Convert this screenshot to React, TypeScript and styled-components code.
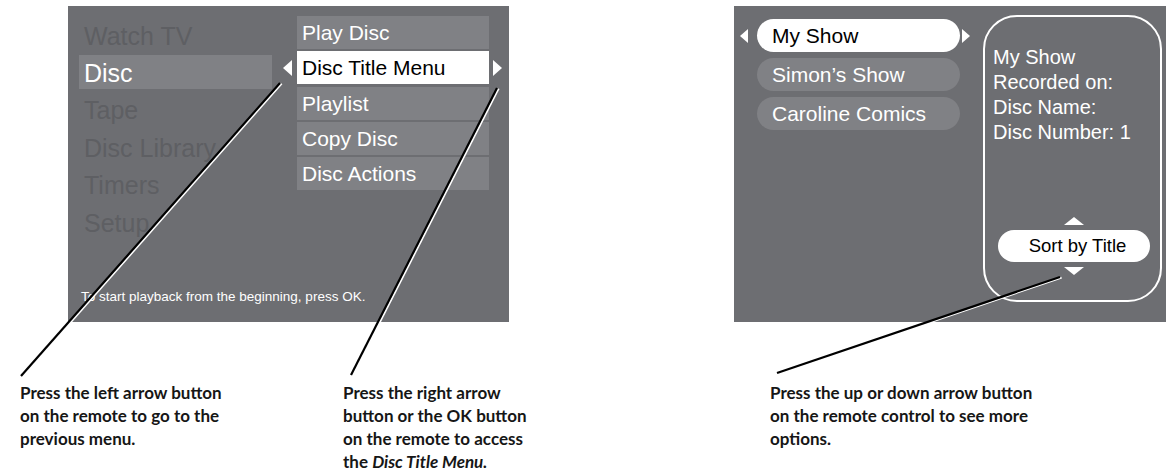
import React from 'react';
import styled, { createGlobalStyle } from 'styled-components';

const GlobalStyle = createGlobalStyle`
  html, body { margin: 0; padding: 0; background: #ffffff; }
  body { font-family: "Liberation Sans", Arial, sans-serif; }
`;

const SCREEN_BG = '#6d6e72';
const ITEM_BG = '#808185';
const DIM = '#5e5f63';

const Page = styled.div`
  position: relative;
  width: 1166px;
  height: 473px;
  overflow: hidden;
`;

const ScreensRow = styled.div`
  display: flex;
  padding: 6px 0 0 68px;
  gap: 225px;
`;

const Screen = styled.section<{ $w: number }>`
  width: ${p => p.$w}px;
  height: 316px;
  flex: none;
  box-sizing: border-box;
  background: ${SCREEN_BG};
  color: #ffffff;
  font-family: "Liberation Sans", Arial, sans-serif;
`;

const LeftScreen = styled(Screen)`
  display: flex;
  flex-direction: column;
  padding: 0 0 17px 11px;
`;

const MenuArea = styled.div`
  display: flex;
  align-items: flex-start;
`;

const MainMenu = styled.ul`
  list-style: none;
  margin: 0;
  padding: 11.6px 0 0;
  width: 193px;
  display: flex;
  flex-direction: column;
  gap: 3.4px;
`;

const MainItem = styled.li<{ $active?: boolean }>`
  height: 34px;
  box-sizing: border-box;
  padding: 3px 5px 0;
  font-size: 25px;
  line-height: 31px;
  white-space: nowrap;
  color: ${p => (p.$active ? '#ffffff' : DIM)};
  background: ${p => (p.$active ? ITEM_BG : 'transparent')};
`;

const SubMenu = styled.ul`
  list-style: none;
  margin: 0;
  padding: 10px 0 0;
  display: flex;
  flex-direction: column;
  gap: 2.3px;
`;

const SubRow = styled.li`
  display: flex;
  align-items: center;
`;

const ArrowSlot = styled.span<{ $side: 'left' | 'right'; $w: number; $pad: number }>`
  width: ${p => p.$w}px;
  flex: none;
  box-sizing: border-box;
  display: flex;
  justify-content: ${p => (p.$side === 'left' ? 'flex-end' : 'flex-start')};
  padding: ${p => (p.$side === 'left' ? `0 ${p.$pad}px 0 0` : `0 0 0 ${p.$pad}px`)};
`;

const SubItem = styled.span<{ $active?: boolean }>`
  width: 192px;
  height: 33px;
  box-sizing: border-box;
  padding: 0 5px;
  font-size: 21px;
  line-height: 34px;
  white-space: nowrap;
  background: ${p => (p.$active ? '#ffffff' : ITEM_BG)};
  color: ${p => (p.$active ? '#000000' : '#ffffff')};
`;

const HelpText = styled.p`
  margin: auto 0 0;
  padding-left: 2px;
  font-size: 13.5px;
  line-height: 16px;
  color: #ffffff;
  white-space: nowrap;
`;

const RightScreen = styled(Screen)`
  display: flex;
  align-items: stretch;
  padding: 9px 4px 20px 6px;
`;

const ShowList = styled.ul`
  list-style: none;
  margin: 4px 0 0;
  padding: 0;
  display: flex;
  flex-direction: column;
  gap: 6px;
  align-self: flex-start;
`;

const ShowRow = styled.li`
  display: flex;
  align-items: center;
`;

const ShowPill = styled.span<{ $active?: boolean }>`
  width: 203px;
  height: 33px;
  box-sizing: border-box;
  margin: 0 2px 0 9px;
  padding-left: 15px;
  border-radius: 17px;
  font-size: 21px;
  line-height: 33px;
  white-space: nowrap;
  background: ${p => (p.$active ? '#ffffff' : ITEM_BG)};
  color: ${p => (p.$active ? '#000000' : '#ffffff')};
`;

const DetailBox = styled.div`
  margin-left: 13px;
  width: 179px;
  box-sizing: border-box;
  border: 2px solid #ffffff;
  border-radius: 34px;
  padding: 28px 6px 25px 8px;
  display: flex;
  flex-direction: column;
`;

const DetailLine = styled.div`
  font-size: 20px;
  line-height: 25px;
  white-space: nowrap;
`;

const SortGroup = styled.div`
  margin-top: auto;
  display: flex;
  flex-direction: column;
  align-items: center;
  gap: 5px;
`;

const SortPill = styled.div`
  width: 152px;
  height: 32px;
  box-sizing: border-box;
  padding-left: 8px;
  border-radius: 16px;
  background: #ffffff;
  color: #000000;
  font-size: 18.5px;
  line-height: 32px;
  text-align: center;
  white-space: nowrap;
`;

const Callouts = styled.div`
  display: grid;
  grid-template-columns: 323px 427px 1fr;
  padding: 58.5px 0 0 20px;
`;

const Callout = styled.p`
  margin: 0;
  font-family: Lato, "Open Sans", sans-serif;
  font-weight: 700;
  font-size: 17px;
  line-height: 23px;
  color: #161616;
  white-space: nowrap;
  em {
    font-style: italic;
  }
`;

const Overlay = styled.svg`
  position: absolute;
  left: 0;
  top: 0;
  pointer-events: none;
`;

type Dir = 'left' | 'right' | 'up' | 'down';

const Triangle: React.FC<{ dir: Dir }> = ({ dir }) => {
  if (dir === 'left' || dir === 'right') {
    const pts = dir === 'left' ? '9,0 9,16 0,8' : '0,0 0,16 9,8';
    return (
      <svg width="9" height="16" viewBox="0 0 9 16" aria-hidden="true">
        <polygon points={pts} fill="#ffffff" />
      </svg>
    );
  }
  const pts = dir === 'up' ? '0,8 20,8 10,0' : '0,0 20,0 10,8';
  return (
    <svg width="20" height="8" viewBox="0 0 20 8" aria-hidden="true">
      <polygon points={pts} fill="#ffffff" />
    </svg>
  );
};

const mainItems = ['Watch TV', 'Disc', 'Tape', 'Disc Library', 'Timers', 'Setup'];
const subItems = ['Play Disc', 'Disc Title Menu', 'Playlist', 'Copy Disc', 'Disc Actions'];
const shows = ['My Show', 'Simon\u2019s Show', 'Caroline Comics'];

const leaders: [number, number, number, number][] = [
  [280, 83, 21, 376],
  [497, 88, 351, 375],
  [1060, 277, 777, 373],
];

export default function App() {
  return (
    <Page>
      <GlobalStyle />
      <ScreensRow>
        <LeftScreen $w={441}>
          <MenuArea>
            <MainMenu>
              {mainItems.map(m => (
                <MainItem key={m} $active={m === 'Disc'}>
                  {m}
                </MainItem>
              ))}
            </MainMenu>
            <SubMenu>
              {subItems.map(s => {
                const active = s === 'Disc Title Menu';
                return (
                  <SubRow key={s}>
                    <ArrowSlot $side="left" $w={25} $pad={5}>
                      {active && <Triangle dir="left" />}
                    </ArrowSlot>
                    <SubItem $active={active}>{s}</SubItem>
                    <ArrowSlot $side="right" $w={14} $pad={4}>
                      {active && <Triangle dir="right" />}
                    </ArrowSlot>
                  </SubRow>
                );
              })}
            </SubMenu>
          </MenuArea>
          <HelpText>To start playback from the beginning, press OK.</HelpText>
        </LeftScreen>

        <RightScreen $w={432}>
          <ShowList>
            {shows.map((s, i) => (
              <ShowRow key={s}>
                <ArrowSlot $side="left" $w={8} $pad={0}>
                  {i === 0 && <Triangle dir="left" />}
                </ArrowSlot>
                <ShowPill $active={i === 0}>{s}</ShowPill>
                <ArrowSlot $side="right" $w={8} $pad={0}>
                  {i === 0 && <Triangle dir="right" />}
                </ArrowSlot>
              </ShowRow>
            ))}
          </ShowList>
          <DetailBox>
            <DetailLine>My Show</DetailLine>
            <DetailLine>Recorded on:</DetailLine>
            <DetailLine>Disc Name:</DetailLine>
            <DetailLine>Disc Number: 1</DetailLine>
            <SortGroup>
              <Triangle dir="up" />
              <SortPill>Sort by Title</SortPill>
              <Triangle dir="down" />
            </SortGroup>
          </DetailBox>
        </RightScreen>
      </ScreensRow>

      <Callouts>
        <Callout>
          Press the left arrow button
          <br />
          on the remote to go to the
          <br />
          previous menu.
        </Callout>
        <Callout>
          Press the right arrow
          <br />
          button or the OK button
          <br />
          on the remote to access
          <br />
          the <em>Disc Title Menu.</em>
        </Callout>
        <Callout>
          Press the up or down arrow button
          <br />
          on the remote control to see more
          <br />
          options.
        </Callout>
      </Callouts>

      <Overlay width={1166} height={473} viewBox="0 0 1166 473">
        {leaders.map(([x1, y1, x2, y2], i) => (
          <g key={i}>
            <line x1={x1 + 1.6} y1={y1 + 0.6} x2={x2 + 1.6} y2={y2 + 0.6} stroke="#ffffff" strokeWidth={2} />
            <line x1={x1} y1={y1} x2={x2} y2={y2} stroke="#000000" strokeWidth={2.2} />
          </g>
        ))}
      </Overlay>
    </Page>
  );
}
